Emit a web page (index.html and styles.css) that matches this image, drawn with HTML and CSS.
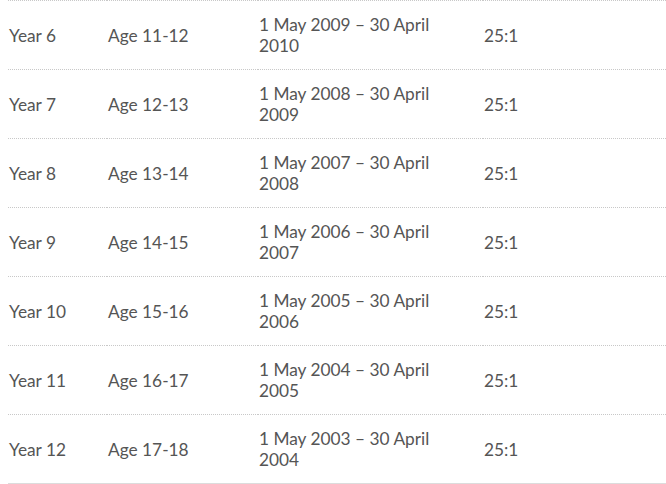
FILE: index.html
```html
<!DOCTYPE html>
<html>
<head>
<meta charset="utf-8">
<link rel="stylesheet" href="styles.css">
</head>
<body>
<table class="years">
<tbody>
<tr><td class="c-year">Year 6</td><td class="c-age">Age 11-12</td><td class="c-date">1 May 2009 – 30 April 2010</td><td class="c-ratio">25:1</td></tr>
<tr><td class="c-year">Year 7</td><td class="c-age">Age 12-13</td><td class="c-date">1 May 2008 – 30 April 2009</td><td class="c-ratio">25:1</td></tr>
<tr><td class="c-year">Year 8</td><td class="c-age">Age 13-14</td><td class="c-date">1 May 2007 – 30 April 2008</td><td class="c-ratio">25:1</td></tr>
<tr><td class="c-year">Year 9</td><td class="c-age">Age 14-15</td><td class="c-date">1 May 2006 – 30 April 2007</td><td class="c-ratio">25:1</td></tr>
<tr><td class="c-year">Year 10</td><td class="c-age">Age 15-16</td><td class="c-date">1 May 2005 – 30 April 2006</td><td class="c-ratio">25:1</td></tr>
<tr><td class="c-year">Year 11</td><td class="c-age">Age 16-17</td><td class="c-date">1 May 2004 – 30 April 2005</td><td class="c-ratio">25:1</td></tr>
<tr class="last"><td class="c-year">Year 12</td><td class="c-age">Age 17-18</td><td class="c-date">1 May 2003 – 30 April 2004</td><td class="c-ratio">25:1</td></tr>
</tbody>
</table>
</body>
</html>
```
FILE: styles.css
```css
html, body {
  margin: 0;
  padding: 0;
  background: #fff;
}
body {
  padding-left: 8px;
  font-family: Lato, "Open Sans", sans-serif;
  font-size: 17.3px;
  line-height: 21px;
  color: #555;
}
.years {
  border-collapse: collapse;
  width: 658px;
  table-layout: fixed;
}
.years td {
  box-sizing: border-box;
  border-top: 1px dotted #c8c8c8;
  padding: 13px 20px 13px 1px;
  height: 69px;
  vertical-align: middle;
}
.years tr.last td {
  border-bottom: 2px solid #dcdcdc;
}
.c-year { width: 99px; }
.c-age { width: 151px; }
.c-date { width: 225px; }
```
